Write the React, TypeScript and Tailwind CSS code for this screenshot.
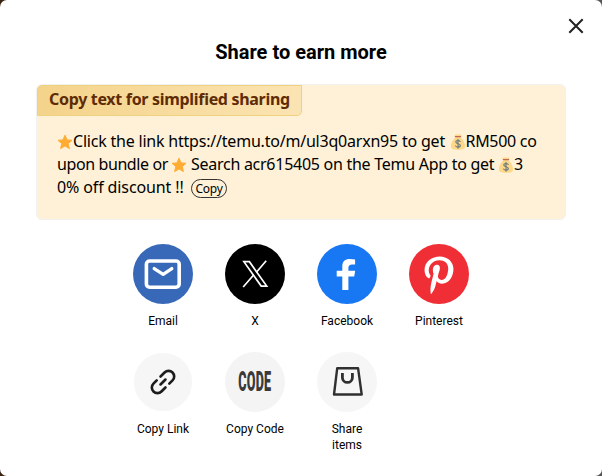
import type { ReactNode } from 'react';
import { FaPinterestP } from 'react-icons/fa';

interface ShareOption {
  label: string;
  background: string;
  icon: ReactNode;
}

const EmailIcon = () => (
  <svg viewBox="0 0 60 60" className="size-[60px]" fill="none" stroke="#fff" strokeLinecap="round" strokeLinejoin="round">
    <rect x="13.4" y="17" width="32.8" height="26.2" rx="3.2" strokeWidth="3.6" />
    <path d="M21.2 24.6L30.2 30.4L38.8 24.6" strokeWidth="3.3" />
  </svg>
);

const XIcon = () => (
  <svg viewBox="0 0 60 60" className="size-[60px]" fill="none" stroke="#fff" strokeWidth="1.7">
    <path d="M18.9 17.7H24.4L41.7 42.1H36.2Z" />
    <path d="M41.2 16.8L31.4 28.2M18.2 43L28.8 30.8" />
  </svg>
);

const FacebookIcon = () => (
  <svg viewBox="0 0 60 60" className="size-[60px]" fill="#fff">
    <path d="M25.3 46V32.4H19.7V26.7H25.3V22C25.3 17.5 28.2 15 32.7 15C34.8 15 36.5 15.2 38.1 15.5V20.5H35.3C32.4 20.5 31.4 22 31.4 23.8V26.7H38.2L37.2 32.4H31.4V46Z" />
  </svg>
);

const LinkIcon = () => (
  <svg viewBox="-30 -30 60 60" className="size-[60px]" fill="none" stroke="#1c1c1c" strokeWidth="2.7" strokeLinecap="round">
    <g transform="rotate(-45)">
      <path d="M2.2 -5.8H8.1A5.8 5.8 0 0 1 8.1 5.8H3.4" />
      <path d="M-2.2 5.8H-8.1A5.8 5.8 0 0 1 -8.1 -5.8H-3.4" />
      <path d="M-3.6 0H3.6" />
    </g>
  </svg>
);

const BagIcon = () => (
  <svg viewBox="0 0 60 60" className="size-[60px]" fill="none" stroke="#303030" strokeLinejoin="round">
    <path d="M20.2 16.3H41.1L44.7 42.5H17Z" strokeWidth="2.4" />
    <path d="M25.4 21V25.4A5 5 0 0 0 35.4 25.4V21" strokeWidth="2.8" />
  </svg>
);

const Star = () => (
  <svg viewBox="0 0 16 16" className="size-4 shrink-0" fill="#ffac33">
    <path
      d="M8 1.2L10 5.9L15 6.3L11.2 9.6L12.4 14.6L8 11.9L3.6 14.6L4.8 9.6L1 6.3L6 5.9Z"
      stroke="#ffac33"
      strokeWidth="1"
      strokeLinejoin="round"
    />
  </svg>
);

const MoneyBag = () => (
  <svg viewBox="0 0 16 16" className="size-4 shrink-0">
    <path
      d="M5.4 3.8C4.8 2.4 4.3 1.3 5 .8C6 .2 7 .8 8 .5C9 .8 10 .2 11 .8C11.7 1.3 11.2 2.4 10.6 3.8C13.2 5.6 15 9 15 12C15 14.8 13.3 15.8 8 15.8S1 14.8 1 12C1 9 2.8 5.6 5.4 3.8Z"
      fill="#fdd888"
    />
    <path d="M5.3 2.6H10.7" stroke="#bf6952" strokeWidth="1.1" strokeLinecap="round" />
    <path
      d="M10.2 7.5C9.6 6.7 8.8 6.5 8 6.5C6.7 6.5 5.8 7.1 5.8 8.1C5.8 10.2 10.3 9.2 10.3 11.4C10.3 12.5 9.3 13.1 8 13.1C7.1 13.1 6.2 12.8 5.6 12M8 5.2V14.3"
      fill="none"
      stroke="#67757f"
      strokeWidth="1.1"
      strokeLinecap="round"
    />
  </svg>
);

const OPTIONS: ShareOption[] = [
  { label: 'Email', background: 'bg-[#3869b9]', icon: <EmailIcon /> },
  { label: 'X', background: 'bg-black', icon: <XIcon /> },
  { label: 'Facebook', background: 'bg-[#1877f2]', icon: <FacebookIcon /> },
  {
    label: 'Pinterest',
    background: 'bg-[#ef2f35]',
    icon: <FaPinterestP className="mt-[3px] h-[38.5px] w-[30px] text-white" />,
  },
  { label: 'Copy Link', background: 'bg-[#f6f6f6] scale-[0.97]', icon: <LinkIcon /> },
  {
    label: 'Copy Code',
    background: 'bg-[#f4f4f4]',
    icon: (
      <span className="-mt-px scale-x-[0.45] font-['Roboto',sans-serif] text-[28px] leading-none font-black tracking-[0.5px] text-[#3a3a3a]">
        CODE
      </span>
    ),
  },
  { label: 'Share items', background: 'bg-[#f6f6f6]', icon: <BagIcon /> },
];

const App = () => {
  return (
    <div className="h-[476px] w-[602px] overflow-hidden bg-linear-to-r from-[#3a2210] from-0% via-[#555] via-10% to-[#555]">
      <div className="flex h-full flex-col rounded-[7px] bg-white font-['Roboto',sans-serif] text-black">
        <div className="flex h-9 shrink-0 justify-end pt-[18px] pr-[18px]">
          <svg viewBox="0 0 16 16" className="size-4" fill="none" stroke="#222" strokeWidth="2">
            <path d="M1.3 1.3L14.7 14.7M14.7 1.3L1.3 14.7" />
          </svg>
        </div>
        <h1 className="h-12 text-center text-xl leading-8 font-bold">Share to earn more</h1>

        <section className="mx-9 h-[136px] shrink-0 rounded-md border border-[#f1f1f1] bg-[#fef1d7] font-['Noto_Sans',sans-serif]">
          <h2 className="flex h-[31px] w-[265px] rounded-tl-[5px] rounded-br-[5px] border border-[#f0d17e] bg-linear-to-r from-[#f4d38a] to-[#fbe4b3] pl-[11px] text-base leading-[27px] font-bold tracking-[-0.31px] whitespace-nowrap text-[#5e2b04]">
            Copy text for simplified sharing
          </h2>
          <div className="mt-3.5 ml-5 text-base leading-[23px] whitespace-nowrap">
            <div className="flex h-[23px] items-center">
              <Star />
              <span className="w-[376.5px] tracking-[-0.21px]">Click the link https://temu.to/m/ul3q0arxn95 to get</span>
              <MoneyBag />
              <span className="tracking-[-0.3px]">RM500 co</span>
            </div>
            <div className="flex h-[23px] items-center">
              <span className="w-[114px] tracking-[-0.4px]">upon bundle or</span>
              <Star />
              <span className="w-[311px] pl-1 tracking-[-0.27px]">Search acr615405 on the Temu App to get</span>
              <MoneyBag />
              <span>3</span>
            </div>
            <div className="flex h-[23px] items-center">
              <span className="w-[134px] tracking-[-0.12px]">0% off discount !!</span>
              <button className="mt-[2px] flex h-[19px] w-9 items-center justify-center rounded-full border border-[#333] text-xs tracking-[-0.3px]">
                Copy
              </button>
            </div>
          </div>
        </section>

        <div className="mt-6 ml-[117px] grid w-[368px] grid-cols-4 gap-y-[23px]">
          {OPTIONS.map(({ label, background, icon }) => (
            <div key={label} className="flex flex-col items-center">
              <div className={`flex size-[60px] items-center justify-center rounded-full ${background}`}>{icon}</div>
              <p className="mt-[9px] w-[60px] text-center text-xs leading-4">{label}</p>
            </div>
          ))}
        </div>
      </div>
    </div>
  );
};

export default App;
